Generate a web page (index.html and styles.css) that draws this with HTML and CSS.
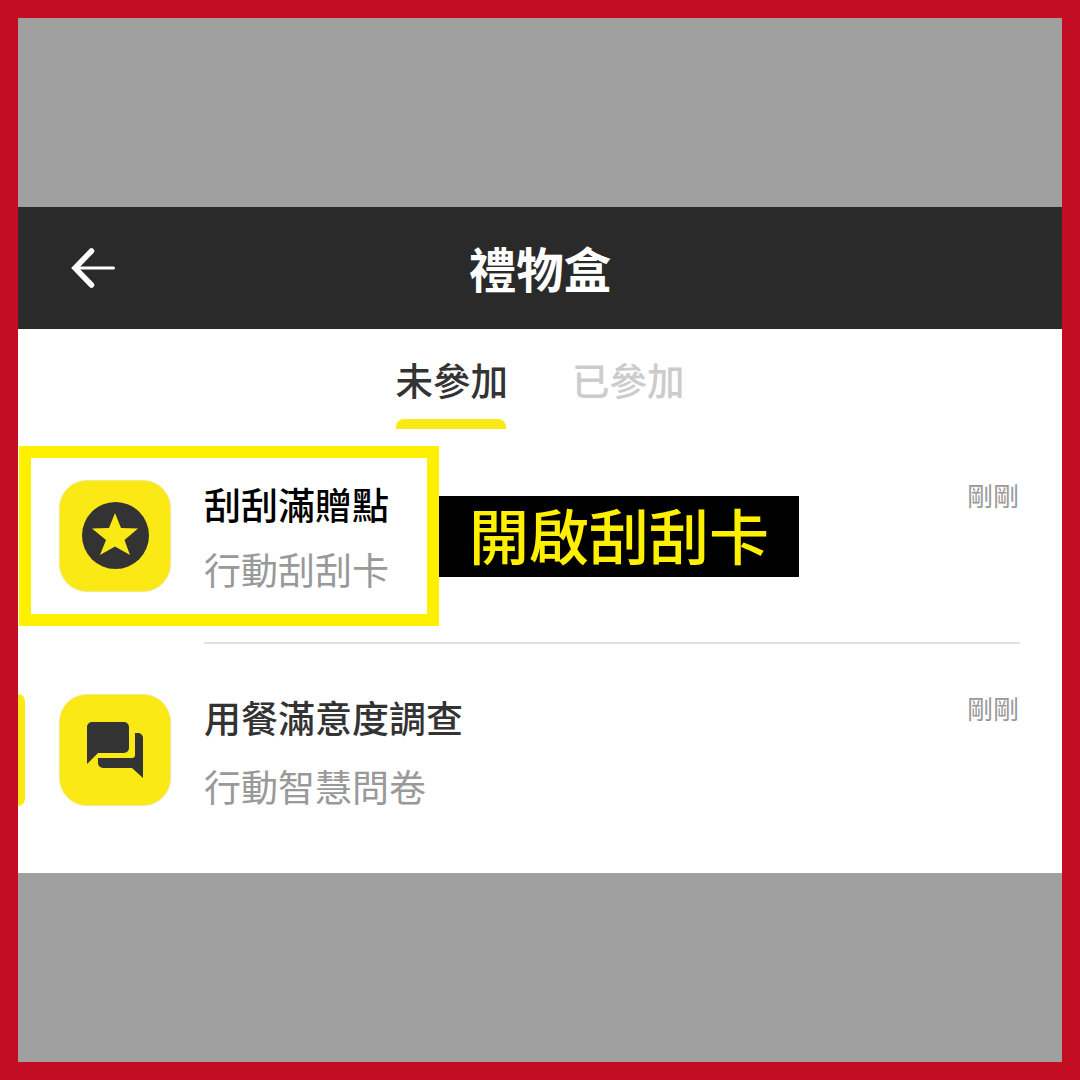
FILE: index.html
```html
<!DOCTYPE html>
<html lang="zh-Hant">
<head>
<meta charset="UTF-8" />
<title>禮物盒</title>
<link rel="stylesheet" href="styles.css">
</head>
<body>
<div class="frame">
	<div class="dim dim-top"></div>
	<div class="sheet">
		<!-- header -->
		<div class="header">
			<svg class="back" width="60" height="60" viewBox="0 0 60 60">
				<path class="back-head" d="M25.500 6 L9 23 L25.500 40" />
				<path class="back-shaft" d="M10 23 H47.500" />
			</svg>
			<h1 class="title">禮物盒</h1>
		</div>
		<!-- tabs -->
		<div class="tabs">
			<div class="tab tab-on">未參加<span class="tab-bar"></span></div>
			<div class="tab">已參加</div>
		</div>
		<!-- list -->
		<div class="row row-first">
			<div class="icon">
				<svg width="113" height="113" viewBox="0 0 113 113">
					<circle cx="56.500" cy="55.500" r="33.500" fill="#333" />
					<path fill="#fbe916" d="M56 33 L62 48 L79 48.500 L65.500 60 L71 75 L56 66.500 L41 75 L47 60 L33 48.500 L50 48 Z" />
				</svg>
			</div>
			<div class="body body-line">
				<div class="text">
					<div class="name name-strong">刮刮滿贈點</div>
					<div class="sub">行動刮刮卡</div>
				</div>
				<div class="time">剛剛</div>
			</div>
		</div>
		<div class="row row-last">
			<div class="peek"></div>
			<div class="icon">
				<svg width="113" height="113" viewBox="0 0 113 113">
					<path fill="#333" d="M33 28 H65 a5 5 0 0 1 5 5 V54 a5 5 0 0 1 -5 5 H39 L28 70 V33 a5 5 0 0 1 5 -5 Z" />
					<path fill="#333" d="M76 39 H79 a5 5 0 0 1 5 5 V84 L73 74 H44 a5 5 0 0 1 -5 -5 V64 H73 a3 3 0 0 0 3 -3 Z" />
				</svg>
			</div>
			<div class="body">
				<div class="text">
					<div class="name">用餐滿意度調查</div>
					<div class="sub sub-far">行動智慧問卷</div>
				</div>
				<div class="time">剛剛</div>
			</div>
		</div>
		<!-- annotation -->
		<div class="note">
			<div class="note-box"></div>
			<div class="note-label">開啟刮刮卡</div>
		</div>
	</div>
	<div class="dim"></div>
</div>
</body>
</html>
```

FILE: styles.css
```css
* {
	padding: 0;
	margin: 0;
	box-sizing: border-box;
}
body {
	font-family: "Noto Sans CJK TC", "Noto Sans", sans-serif;
	background: #a0a0a0;
}
.frame {
	width: 1080px;
	height: 1080px;
	border: 18px solid #c30d23;
	display: flex;
	flex-direction: column;
}
.dim {
	flex: 1;
	background: #a0a0a0;
}
.dim-top {
	flex: none;
	height: 189px;
}

.sheet {
	position: relative;
	background: #fff;
}

/* header */
.header {
	height: 122px;
	background: #2a2a2a;
	display: flex;
	align-items: center;
	justify-content: center;
	position: relative;
}
.back {
	position: absolute;
	left: 48px;
	top: 38px;
}
.back-head,
.back-shaft {
	fill: none;
	stroke: #fff;
	stroke-linecap: round;
	stroke-linejoin: miter;
}
.back-head {
	stroke-width: 5.500px;
}
.back-shaft {
	stroke-width: 3px;
}
.title {
	font-size: 47.500px;
	font-weight: 700;
	line-height: 60px;
	color: #fff;
}

/* tabs */
.tabs {
	height: 100px;
	display: flex;
	justify-content: center;
	gap: 64px;
	padding-top: 25px;
}
.tab {
	position: relative;
	font-size: 37.500px;
	font-weight: 500;
	line-height: 50px;
	height: 75px;
	color: #ccc;
}
.tab-on {
	color: #333;
}
.tab-bar {
	position: absolute;
	left: 0;
	right: 2px;
	bottom: 0;
	height: 10px;
	background: #fbe916;
	border-radius: 8px 8px 0 0;
}

/* list */
.row {
	display: flex;
	padding-left: 41px;
	padding-right: 42px;
}
.row-first {
	padding-top: 51px;
}
.row-last {
	padding-left: 0;
	padding-top: 50px;
	padding-bottom: 62px;
}
.peek {
	width: 7px;
	height: 112px;
	margin-right: 34px;
	background: #fbe916;
	border-radius: 0 7px 7px 0;
}
.icon {
	flex: none;
	width: 112px;
	height: 112px;
	margin-right: 33px;
	background: #fbe916;
	border: 1px solid #f3e88a;
	border-radius: 28px;
	overflow: hidden;
}
.icon svg {
	display: block;
	margin: -1px;
}
.body {
	flex: 1;
	display: flex;
	justify-content: space-between;
	align-items: flex-start;
}
.body-line {
	height: 164px;
	border-bottom: 2px solid #e0e0e0;
}
.name {
	font-size: 37px;
	font-weight: 500;
	line-height: 50px;
	margin-top: -2px;
	color: #333;
}
.name-strong {
	color: #000;
	margin-top: -1px;
}
.sub {
	font-size: 37px;
	line-height: 50px;
	color: #999;
	margin-top: 15px;
}
.sub-far {
	margin-top: 19px;
}
.time {
	font-size: 26px;
	line-height: 30px;
	color: #999;
	margin-right: 1px;
}
.row-last .time {
	margin-top: -1px;
}

/* annotation over the list */
.note {
	position: absolute;
	left: 1px;
	top: 239px;
	display: flex;
	align-items: center;
}
.note-box {
	width: 420px;
	height: 180px;
	border: 12px solid #fff000;
}
.note-label {
	width: 360px;
	height: 81px;
	background: #000;
	color: #fff000;
	font-size: 60px;
	font-weight: 500;
	line-height: 75px;
	padding-left: 30px;
}
```
